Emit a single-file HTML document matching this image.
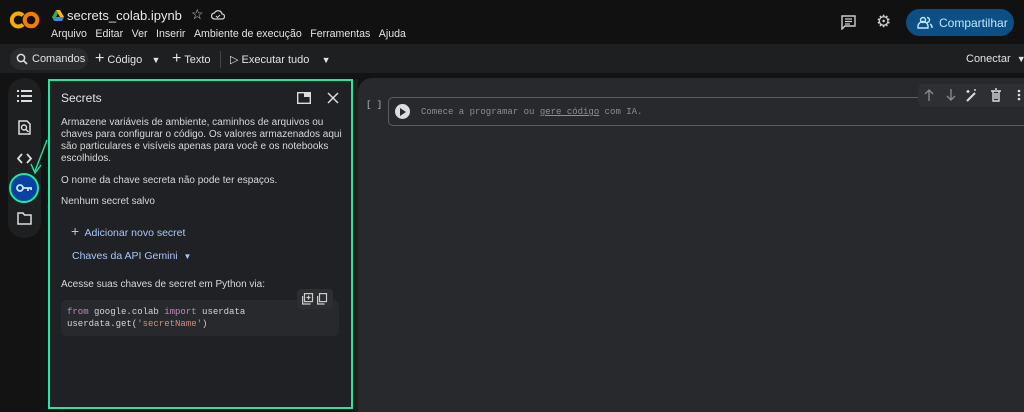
<!DOCTYPE html>
<html><head><meta charset="utf-8"><style>
*{box-sizing:border-box;margin:0;padding:0}
body{width:1024px;height:412px;overflow:hidden;background:#131314;font-family:"Liberation Sans",sans-serif;color:#e3e3e3;position:relative}
.abs{position:absolute}
.menu span{margin-right:8.5px}
.mono{font-family:"Liberation Mono",monospace}
</style></head><body>
<!-- header -->
<div class="abs" style="left:0;top:0;width:1024px;height:44px;background:#111112"></div>
<svg class="abs" style="left:10px;top:11px" width="30" height="18" viewBox="0 0 30 18"><path d="M13 4.5A6.5 6.5 0 1 0 13 13.5" fill="none" stroke="#f9ab00" stroke-width="4"/><circle cx="21" cy="9" r="6.3" fill="none" stroke="#f57c00" stroke-width="4"/></svg>
<svg class="abs" style="left:52px;top:10px" width="12" height="11" viewBox="0 0 12 11"><path d="M4 0h4l4 7H8z" fill="#fbbc04"/><path d="M4 0l2 3.5L2 11 0 7z" fill="#34a853"/><path d="M2 11l2-4h8l-2 4z" fill="#4285f4"/></svg>
<div class="abs" style="left:67px;top:8px;font-size:13px;color:#e8e8e8">secrets_colab.ipynb</div>
<div class="abs" style="left:191px;top:6px;font-size:14px;color:#ccc">☆</div>
<svg class="abs" style="left:211px;top:9px" width="14" height="11" viewBox="0 0 14 11"><path d="M3.5 10h7.5a2.5 2.5 0 0 0 0-5 4 4 0 0 0-7.5-1A3 3 0 0 0 3.5 10z" fill="none" stroke="#ccc" stroke-width="1.3"/><path d="M5 7l1.5 1.5L9 6" fill="none" stroke="#ccc" stroke-width="1.1"/></svg>
<div class="abs menu" style="left:51px;top:28px;font-size:10.6px;color:#e3e3e3;white-space:nowrap"><span>Arquivo</span><span>Editar</span><span>Ver</span><span>Inserir</span><span>Ambiente de execução</span><span>Ferramentas</span><span>Ajuda</span></div>
<svg class="abs" style="left:841px;top:15px" width="15" height="15" viewBox="0 0 15 15"><path d="M1 1h13v10H4l-3 3z" fill="none" stroke="#ccc" stroke-width="1.4"/><path d="M4 4h7M4 6.5h7M4 9h5" stroke="#ccc" stroke-width="1.2"/></svg>
<div class="abs" style="left:876px;top:12px;font-size:17px;color:#ccc">⚙</div>
<div class="abs" style="left:906px;top:9px;width:108px;height:27px;border-radius:14px;background:#0b4f84"></div>
<svg class="abs" style="left:917px;top:16px" width="16" height="13" viewBox="0 0 16 13"><circle cx="6" cy="4" r="2.5" fill="none" stroke="#c2e7ff" stroke-width="1.4"/><path d="M1 12v-1.5a5 5 0 0 1 10 0V12z" fill="none" stroke="#c2e7ff" stroke-width="1.4"/><path d="M10 1.5a2.5 2.5 0 0 1 0 5M13 8a4 4 0 0 1 2 3v1" fill="none" stroke="#c2e7ff" stroke-width="1.4"/></svg>
<div class="abs" style="left:939px;top:16px;font-size:12px;color:#c2e7ff">Compartilhar</div>
<!-- toolbar -->
<div class="abs" style="left:0;top:44px;width:1024px;height:29px;background:#1e1f20"></div>
<div class="abs" style="left:10px;top:48px;width:78px;height:22px;border-radius:11px;background:#2a2b2d"></div>
<svg class="abs" style="left:16px;top:53px" width="12" height="12" viewBox="0 0 12 12"><circle cx="5" cy="5" r="3.6" fill="none" stroke="#ddd" stroke-width="1.5"/><path d="M7.7 7.7L11 11" stroke="#ddd" stroke-width="1.6"/></svg>
<div class="abs" style="left:32px;top:53px;font-size:11px;color:#e3e3e3">Comandos</div>
<div class="abs" style="left:95px;top:50px;font-size:11px;color:#e3e3e3;white-space:nowrap"><span style="font-size:16px">+</span> Código &nbsp;&nbsp;<span style="font-size:9px">▼</span></div>
<div class="abs" style="left:172px;top:50px;font-size:11px;color:#e3e3e3;white-space:nowrap"><span style="font-size:16px">+</span> Texto</div>
<div class="abs" style="left:220px;top:51px;width:1px;height:17px;background:#444"></div>
<div class="abs" style="left:230px;top:53px;font-size:11px;color:#e3e3e3;white-space:nowrap">▷ Executar tudo &nbsp;&nbsp;&nbsp;<span style="font-size:9px">▼</span></div>
<div class="abs" style="left:966px;top:53px;font-size:11px;color:#e3e3e3;white-space:nowrap">Conectar &nbsp;<span style="font-size:9px">▼</span></div>
<!-- left rail -->
<div class="abs" style="left:8px;top:78px;width:33px;height:160px;border-radius:16px;background:#1e1f20"></div>
<svg class="abs" style="left:17px;top:90px" width="15" height="13" viewBox="0 0 15 13"><g fill="#ddd"><rect x="0" y="0" width="2" height="2"/><rect x="0" y="5" width="2" height="2"/><rect x="0" y="10" width="2" height="2"/><rect x="4" y="0" width="11" height="2"/><rect x="4" y="5" width="11" height="2"/><rect x="4" y="10" width="11" height="2"/></g></svg>
<svg class="abs" style="left:18px;top:120px" width="13" height="15" viewBox="0 0 13 15"><path d="M1 1h8l3 3v10H1z" fill="none" stroke="#ddd" stroke-width="1.5"/><circle cx="6" cy="7.5" r="2.5" fill="none" stroke="#ddd" stroke-width="1.4"/><path d="M8 9.5l2.5 2.5" stroke="#ddd" stroke-width="1.5"/></svg>
<svg class="abs" style="left:17px;top:153px" width="15" height="11" viewBox="0 0 15 11"><path d="M5 1L1 5.5 5 10M10 1l4 4.5-4 4.5" fill="none" stroke="#ddd" stroke-width="1.8"/></svg>
<div class="abs" style="left:9px;top:173px;width:30px;height:30px;border-radius:50%;background:#0842a0;border:2px solid #1de9a0"></div>
<svg class="abs" style="left:16px;top:183px" width="17" height="10" viewBox="0 0 17 10"><circle cx="4" cy="5" r="3" fill="none" stroke="#d3e3fd" stroke-width="1.8"/><path d="M7 5h9M12 5v3M15 5v2" stroke="#d3e3fd" stroke-width="1.8"/></svg>
<svg class="abs" style="left:17px;top:212px" width="15" height="13" viewBox="0 0 15 13"><path d="M1 1h5l1.5 2H14v9H1z" fill="none" stroke="#ddd" stroke-width="1.5"/></svg>
<svg class="abs" style="left:25px;top:138px" width="25" height="40" viewBox="0 0 25 40"><path d="M22 2L10 33" stroke="#1de9a0" stroke-width="1.4"/><path d="M6 26l4 9 6-8" fill="none" stroke="#1de9a0" stroke-width="1.4"/></svg>
<!-- panel -->
<div class="abs" style="left:48px;top:79px;width:305px;height:330px;background:#202124;border:2px solid #1de9a0"></div>
<div class="abs" style="left:61px;top:91px;font-size:12px;color:#e3e3e3">Secrets</div>
<svg class="abs" style="left:297px;top:92px" width="14" height="12" viewBox="0 0 14 12"><rect x="0.7" y="0.7" width="12.6" height="10.6" fill="none" stroke="#ddd" stroke-width="1.4"/><rect x="7" y="1" width="6" height="4" fill="#ddd"/></svg>
<svg class="abs" style="left:327px;top:92px" width="12" height="12" viewBox="0 0 12 12"><path d="M1 1l10 10M11 1L1 11" stroke="#ddd" stroke-width="1.5"/></svg>
<div class="abs" style="left:61px;top:117px;width:290px;font-size:10px;line-height:12px;color:#d8d8d8">Armazene variáveis de ambiente, caminhos de arquivos ou chaves para configurar o código. Os valores armazenados aqui são particulares e visíveis apenas para você e os notebooks escolhidos.</div>
<div class="abs" style="left:61px;top:175px;font-size:10px;color:#d8d8d8">O nome da chave secreta não pode ter espaços.</div>
<div class="abs" style="left:61px;top:196px;font-size:10px;color:#d8d8d8">Nenhum secret salvo</div>
<div class="abs" style="left:71px;top:223px;font-size:10.5px;color:#a8c7fa;white-space:nowrap"><span style="font-size:14px">+</span>&nbsp; Adicionar novo secret</div>
<div class="abs" style="left:72px;top:250px;font-size:10.5px;color:#a8c7fa;white-space:nowrap">Chaves da API Gemini &nbsp;<span style="font-size:8px">▼</span></div>
<div class="abs" style="left:61px;top:279px;font-size:10px;color:#d8d8d8">Acesse suas chaves de secret em Python via:</div>
<div class="abs" style="left:61px;top:300px;width:278px;height:36px;border-radius:5px;background:#28292c"></div>
<div class="abs" style="left:297px;top:289px;width:36px;height:20px;border-radius:4px;background:#2d2e31"></div>
<svg class="abs" style="left:302px;top:293px" width="26" height="12" viewBox="0 0 26 12"><g fill="none" stroke="#ccc" stroke-width="1.2"><rect x="2.5" y="0.6" width="8" height="8"/><path d="M0.6 3v8h8"/><path d="M6.5 2.5v4M4.5 4.5h4"/><rect x="17.5" y="0.6" width="7" height="8"/><path d="M15.6 3v8h7"/></g></svg>
<div class="abs mono" style="left:67px;top:306px;font-size:9px;line-height:12px;color:#d4d4d4;white-space:pre"><span style="color:#c586c0">from</span> google.colab <span style="color:#c586c0">import</span> userdata
userdata.get(<span style="color:#ce9178">'secretName'</span>)</div>
<!-- gap strip -->
<div class="abs" style="left:355px;top:79px;width:3px;height:333px;background:#1e1f20"></div>
<!-- main -->
<div class="abs" style="left:358px;top:78px;width:666px;height:334px;border-radius:14px 0 0 0;background:#28292c"></div>
<div class="abs mono" style="left:366px;top:100px;font-size:9px;color:#bbb">[ ]</div>
<div class="abs" style="left:388px;top:97px;width:640px;height:29px;border:1px solid #5c5d60;border-radius:5px"></div>
<div class="abs" style="left:395px;top:104px;width:15px;height:15px;border-radius:50%;background:#ddd"></div>
<div class="abs" style="left:400px;top:108px;width:0;height:0;border-left:6px solid #28292c;border-top:4px solid transparent;border-bottom:4px solid transparent"></div>
<div class="abs mono" style="left:421px;top:107px;font-size:9px;color:#8e8e8e;white-space:nowrap">Comece a programar ou <u>gere código</u> com IA.</div>
<div class="abs" style="left:918px;top:84px;width:110px;height:23px;border-radius:5px;background:#2e2f32"></div>
<svg class="abs" style="left:922px;top:88px" width="102" height="14" viewBox="0 0 102 14"><g fill="none" stroke-width="1.4"><path d="M7 13V2M3 6l4-4 4 4" stroke="#888"/><path d="M29 1v11M25 8l4 4 4-4" stroke="#888"/><path d="M45 13l8-8" stroke="#ddd" stroke-width="2"/><path d="M46 2v3M44.5 3.5h3M53 1v2" stroke="#ddd"/><path d="M69 3h10M71 3v10h6V3M73 1h2M73 5v6M75 5v6" stroke="#ddd"/></g><g fill="#ddd"><circle cx="97" cy="3" r="1.3"/><circle cx="97" cy="7" r="1.3"/><circle cx="97" cy="11" r="1.3"/></g></svg>
</body></html>
